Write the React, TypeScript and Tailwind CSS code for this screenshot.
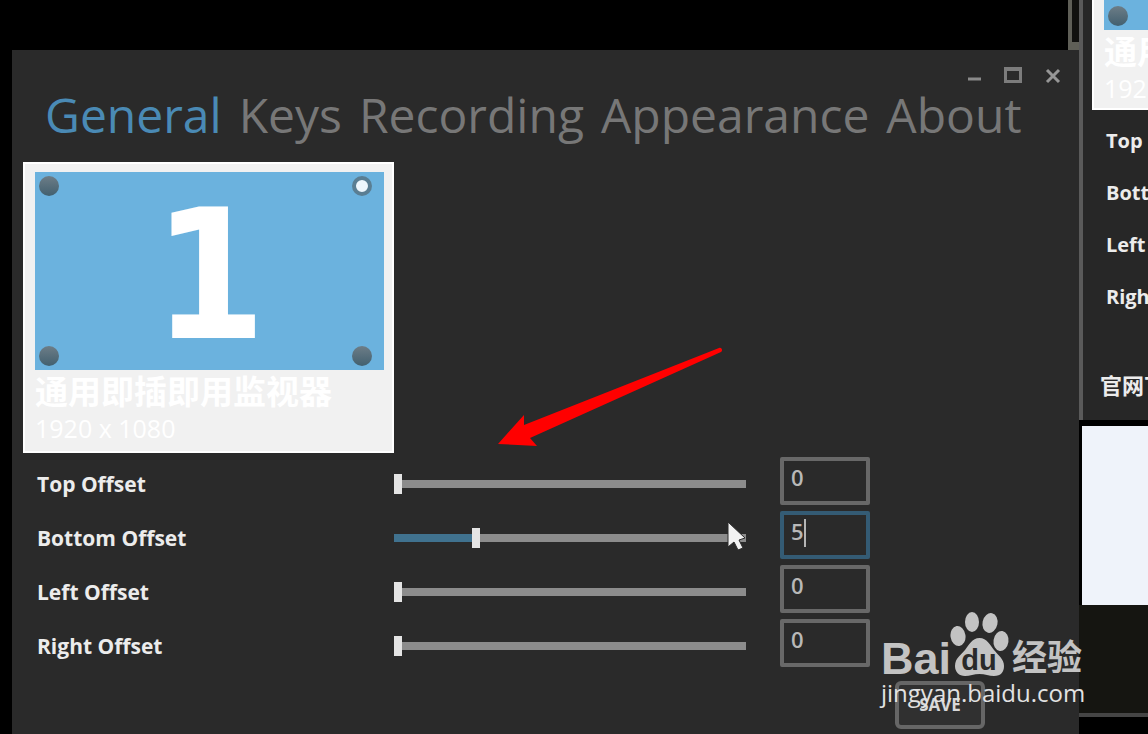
import { useState } from "react";
import clsx from "clsx";

const TABS = ["General", "Keys", "Recording", "Appearance", "About"];
const MAX_OFFSET = 22;

const OFFSETS = [
    { id: "top", label: "Top Offset", value: 0 },
    { id: "bottom", label: "Bottom Offset", value: 5 },
    { id: "left", label: "Left Offset", value: 0 },
    { id: "right", label: "Right Offset", value: 0 },
];

const CORNERS = [
    { id: "top-left", place: "left-1 top-1" },
    { id: "top-right", place: "right-3 top-1" },
    { id: "bottom-left", place: "left-1 bottom-1" },
    { id: "bottom-right", place: "right-3 bottom-1" },
];

function WindowControls() {
    return (
        <div className="flex h-[34px] items-end justify-end gap-4 pr-3.5">
            <button type="button" aria-label="Minimize">
                <svg className="h-[18px] w-6" viewBox="0 0 24 18" fill="none" stroke="#8a8a8a" strokeWidth={3}>
                    <path d="M7 13h13" />
                </svg>
            </button>
            <button type="button" aria-label="Maximize">
                <svg className="h-[18px] w-6" viewBox="0 0 24 18" fill="none" stroke="#7c7c7c" strokeWidth={3}>
                    <path d="M4.500 3.500h15v12h-15z" />
                    <path d="M3 3h18" strokeWidth={4} />
                </svg>
            </button>
            <button type="button" aria-label="Close">
                <svg className="h-[18px] w-6" viewBox="0 0 24 18" fill="none" stroke="#969696" strokeWidth={3}>
                    <path d="M6 4l12 12M18 4L6 16" />
                </svg>
            </button>
        </div>
    );
}

function MonitorCard() {
    const [corner, setCorner] = useState("top-right");

    return (
        <div className="h-[291px] w-[371px] border-2 border-white bg-[#f1f1f1] pl-[10px] pr-2 pt-2 text-white">
            <div className="relative flex h-[198px] items-center justify-center bg-[#6bb2de] pt-2.5">
                <span className="font-['DejaVu_Sans_Condensed','DejaVu_Sans',sans-serif] text-[180px] font-bold leading-none">1</span>
                {CORNERS.map((c) => (
                    <input
                        key={c.id}
                        type="radio"
                        name="corner"
                        aria-label={c.id}
                        checked={corner === c.id}
                        onChange={() => setCorner(c.id)}
                        className={clsx(
                            "absolute size-5 appearance-none rounded-full bg-linear-to-b from-[#6d7d87] to-[#42606f] checked:border-4 checked:border-[#5a7e93] checked:bg-[#eef7fd] checked:bg-none",
                            c.place
                        )}
                    />
                ))}
            </div>
            <div className="mt-1 text-[33px] font-bold leading-9">通用即插即用监视器</div>
            <div className="text-[25px] leading-9">1920 x 1080</div>
        </div>
    );
}

interface OffsetRowProps {
    id: string;
    label: string;
    value: number;
    active: boolean;
    onChange: (value: number) => void;
    onFocus: () => void;
}

function OffsetRow({ id, label, value, active, onChange, onFocus }: OffsetRowProps) {
    const fill = `${(value / MAX_OFFSET) * 100}%`;

    return (
        <div className="flex h-[54px] items-center">
            <label htmlFor={id} className="w-[357px] shrink-0 text-[21px] font-bold leading-7 text-[#ececec]">
                {label}
            </label>
            <input
                type="range"
                min={0}
                max={MAX_OFFSET}
                value={value}
                aria-label={label}
                onChange={(e) => onChange(Number(e.target.value))}
                style={{ "--fill": fill } as React.CSSProperties}
                className="h-5 min-w-0 flex-1 appearance-none bg-transparent [&::-webkit-slider-runnable-track]:h-2 [&::-webkit-slider-runnable-track]:bg-[linear-gradient(to_right,#40728f_var(--fill),#8c8c8c_var(--fill))] [&::-webkit-slider-thumb]:-mt-1.5 [&::-webkit-slider-thumb]:h-5 [&::-webkit-slider-thumb]:w-2 [&::-webkit-slider-thumb]:appearance-none [&::-webkit-slider-thumb]:bg-[#e4e4e4]"
            />
            <div className="relative ml-[34px] self-start">
                <input
                    id={id}
                    type="text"
                    value={value}
                    onFocus={onFocus}
                    onChange={(e) => onChange(Math.min(MAX_OFFSET, Number(e.target.value) || 0))}
                    className={clsx(
                        "block h-12 w-[90px] rounded-xs border-4 pb-2 pl-[7px] text-[22px] font-semibold leading-8 text-[#b8b8b8] outline-none",
                        active ? "border-[#345b74]" : "border-[#686868]"
                    )}
                />
                {active && <span className="absolute left-6 top-2 h-7 w-0.5 bg-[#b5b5b5]" />}
            </div>
        </div>
    );
}

// The second settings window, cut off by the edge of the desktop
function SideWindow() {
    return (
        <div className="flex w-[69px] shrink-0 flex-col overflow-hidden whitespace-nowrap">
            <div className="h-[420px] border-l-4 border-[#5a5a5a] bg-[#272727] pl-[9px] text-xl font-bold text-[#ececec]">
                <div className="h-[110px] w-[371px] border-b-2 border-l-2 border-white bg-[#f1f1f1] pl-[10px] text-white">
                    <div className="h-[30px] bg-[#6bb2de] px-1 pt-1.5">
                        <div className="size-5 rounded-full bg-linear-to-b from-[#6d7d87] to-[#42606f]" />
                    </div>
                    <div className="mt-1 text-[33px] leading-9">通用即插即用监视器</div>
                    <div className="text-[25px] font-normal leading-9">1920 x 1080</div>
                </div>
                <div className="pl-[14px] pt-[5px]">
                    {OFFSETS.map((o) => (
                        <div key={o.id} className="h-[52px] leading-[52px]">
                            {o.label}
                        </div>
                    ))}
                </div>
                <div className="pl-2 pt-[46px] text-[22px] leading-8">官网下载</div>
            </div>
            <div className="ml-[3px] h-[185px] border-t-[6px] border-black bg-[#eff3fa]" />
            <div className="h-[112px] border-b-4 border-[#454545] bg-[#151511]" />
        </div>
    );
}

function Watermark() {
    return (
        <div className="pointer-events-none absolute right-[64px] top-[611px] w-[203px]">
            <div className="flex h-[66px] items-end">
                <span className="w-[69px] font-['Liberation_Sans',Arial,sans-serif] text-[45px] font-bold leading-9 text-[#c3c3c3]">Bai</span>
                <svg className="h-[66px] w-[60px] shrink-0" viewBox="0 0 60 66">
                    <g fill="#c3c3c3">
                        <ellipse cx="8" cy="25" rx="7.500" ry="10" transform="rotate(-8 8 25)" />
                        <ellipse cx="22" cy="11" rx="7" ry="10" />
                        <ellipse cx="40" cy="12" rx="7.500" ry="10" transform="rotate(12 40 12)" />
                        <ellipse cx="51" cy="30" rx="7.500" ry="10" transform="rotate(8 51 30)" />
                        <path d="M29.500 27C22 27 19 34 15 39C11 44 5 47 5 55C5 61 9 65 15 65C20 65 24 63 29.500 63C35 63 39 65 44 65C51 65 54 61 54 55C54 48 48 44 44 39C40 34 37 27 29.500 27Z" />
                    </g>
                    <text x="29" y="59" textAnchor="middle" fill="#2a2a2a" fontFamily="Liberation Sans, Arial, sans-serif" fontWeight="700" fontSize="29">du</text>
                </svg>
                <span className="ml-0.5 text-[35px] font-bold leading-10 text-[#c3c3c3]">经验</span>
            </div>
            <div className="text-2xl leading-8 text-[#e2e2e2]">jingyan.baidu.com</div>
        </div>
    );
}

export default function App() {
    const [tab, setTab] = useState("General");
    const [focused, setFocused] = useState("bottom");
    const [offsets, setOffsets] = useState(OFFSETS);

    const updateOffset = (id: string, value: number) => {
        setOffsets((prev) => prev.map((o) => (o.id === id ? { ...o, value } : o)));
    };

    return (
        <div className="relative flex min-h-screen overflow-hidden bg-black font-['Open_Sans','Noto_Sans_CJK_SC',sans-serif]">
            <div className="flex min-w-0 flex-1 flex-col pl-3">
                <div className="flex h-[50px] justify-end">
                    <div className="w-[11px] border-b-8 border-l-4 border-[#5f5f57] bg-[#11110f]" />
                </div>

                <main className="flex-1 bg-[#2a2a2a]">
                    <WindowControls />
                    <nav className="flex gap-[17px] pl-[33px] pt-1.5">
                        {TABS.map((name) => (
                            <button
                                key={name}
                                type="button"
                                onClick={() => setTab(name)}
                                className={clsx("text-5xl leading-[50px]", tab === name ? "text-[#4a8ab5]" : "text-[#777777]")}
                            >
                                {name}
                            </button>
                        ))}
                    </nav>

                    <div className="pl-[11px] pt-[22px]">
                        <MonitorCard />
                        <div className="max-w-[847px] pl-[14px] pt-1">
                            {offsets.map((o) => (
                                <OffsetRow
                                    key={o.id}
                                    {...o}
                                    active={focused === o.id}
                                    onFocus={() => setFocused(o.id)}
                                    onChange={(value) => updateOffset(o.id, value)}
                                />
                            ))}
                        </div>
                    </div>

                    <div className="flex justify-end pr-[94px] pt-2">
                        <button
                            type="button"
                            className="h-12 w-[90px] rounded-md border-4 border-[#666666] bg-[#303030] text-[17px] font-bold text-[#d8d8d8]"
                        >
                            SAVE
                        </button>
                    </div>
                </main>
            </div>

            <SideWindow />

            {/* Arrow pointing at the sliders */}
            <svg className="pointer-events-none absolute left-[496px] top-[346px] h-[102px] w-[230px]" viewBox="0 0 230 102" fill="#ff0000">
                <path d="M2 98L28 69V79L223 2C226 1 227 5 225 6L34 92L41 100Z" />
            </svg>

            {/* Mouse pointer */}
            <svg className="pointer-events-none absolute left-[726px] top-[520px] h-8 w-5" viewBox="0 0 20 32">
                <path d="M2 2V27L8 22L12 30L17 28L13 20L19 18Z" fill="#f2f2f2" stroke="#2a2a2a" />
            </svg>

            <Watermark />
        </div>
    );
}
